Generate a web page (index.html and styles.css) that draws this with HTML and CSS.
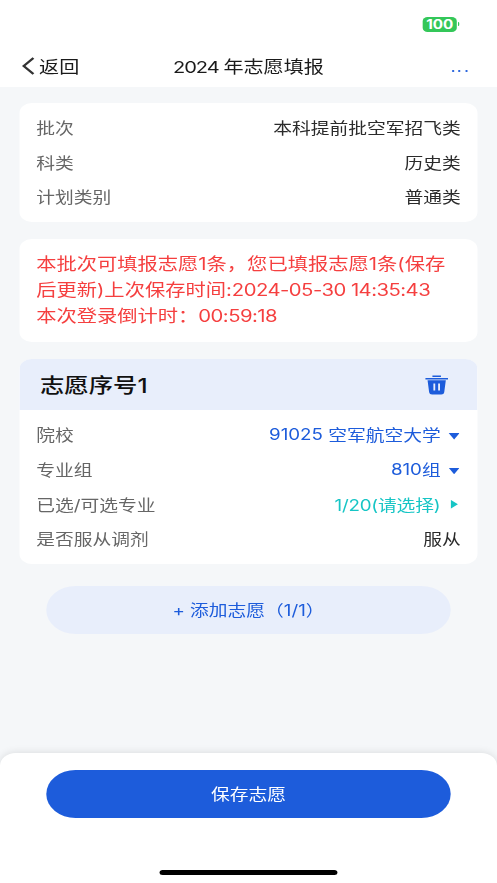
FILE: index.html
```html
<!DOCTYPE html>
<html lang="zh-CN">
<head>
<meta charset="utf-8">
<title>2024年志愿填报</title>
<link rel="stylesheet" href="styles.css">
</head>
<body>
<div class="screen">
  <header class="top">
    <div class="status"><span class="battery">100</span><span class="battery-tip"></span></div>
    <nav class="nav">
      <a class="back"><svg class="chevron" viewBox="0 0 10 18"><path d="M9.2 1 1.2 9 9.2 17"/></svg><span>返回</span></a>
      <h1 class="title"><span class="year">2024</span>年志愿填报</h1>
      <span class="more"><i></i><i></i><i></i></span>
    </nav>
  </header>
  <main class="content">
    <section class="card rows">
      <div class="row"><span class="label">批次</span><span>本科提前批空军招飞类</span></div>
      <div class="row"><span class="label">科类</span><span>历史类</span></div>
      <div class="row"><span class="label">计划类别</span><span>普通类</span></div>
    </section>
    <section class="card notice">
      <p>本批次可填报志愿1条，您已填报志愿1条(保存</p>
      <p>后更新)上次保存时间:<span class="stamp">2024-05-30 14:35:43</span></p>
      <p>本次登录倒计时：<span class="stamp">00:59:18</span></p>
    </section>
    <section class="card wish">
      <div class="wish-head">
        <h2>志愿序号1</h2>
        <svg class="trash" viewBox="0 0 19 20"><path d="M6 0.4h7v1.7H6zM0.2 3h18.6v1.5H0.2z"/><path fill-rule="evenodd" d="M2 5.3h15l-1.3 12q-.2 2.2-2.4 2.2H5.7q-2.2 0-2.4-2.2zM6.8 8.5v7h1.5v-7zm3.9 0v7h1.5v-7z"/></svg>
      </div>
      <div class="rows">
        <div class="row"><span class="label">院校</span><span class="pick"><span class="num">91025 </span>空军航空大学<i class="down"></i></span></div>
        <div class="row"><span class="label">专业组</span><span class="pick"><span class="num">810</span>组<i class="down"></i></span></div>
        <div class="row"><span class="label">已选/可选专业</span><span class="pick teal">1/20(请选择)<i class="right"></i></span></div>
        <div class="row"><span class="label">是否服从调剂</span><span>服从</span></div>
      </div>
    </section>
    <button class="button add">+ 添加志愿（1/1）</button>
  </main>
  <footer class="footer">
    <button class="button save">保存志愿</button>
    <div class="home"></div>
  </footer>
</div>
</body>
</html>
```
FILE: styles.css
```css
* { box-sizing: border-box; }
html, body { margin: 0; height: 883px; overflow: hidden; background: #f5f7f9; }
.screen {
  width: 408px;
  height: 883px;
  display: flex;
  flex-direction: column;
  transform: scaleX(1.2181);
  transform-origin: 0 0;
  font-family: Inter, "Noto Sans CJK SC", sans-serif;
  font-size: 15.4px;
  color: #2b2b2b;
  white-space: nowrap;
}
h1, h2, p { margin: 0; font-weight: 400; }
.top { height: 87px; background: #fff; }
.status { height: 47px; padding: 17px 30.6px 0 0; display: flex; justify-content: flex-end; align-items: flex-start; }
.battery {
  width: 27.4px; height: 14.5px; border-radius: 4px; background: #34c759;
  color: #fff; font-size: 12.5px; line-height: 15.6px; font-weight: 700; text-align: center;
}
.battery-tip { width: 1.7px; height: 4px; margin: 5px 0 0 1px; border-radius: 0 2px 2px 0; background: #34c759; }
.nav { height: 38px; padding: 0 18px; display: grid; grid-template-columns: 1fr auto 1fr; align-items: center; font-size: 16.5px; color: #1a1a1a; }
.back { display: flex; align-items: center; gap: 3.6px; }
.chevron { width: 10.5px; height: 18px; fill: none; stroke: #333; stroke-width: 2; }
.title { font-size: 16.5px; }
.year { margin-right: 4px; letter-spacing: -0.9px; }
.more { display: flex; justify-content: flex-end; gap: 3.4px; padding: 10px 6.4px 0 0; }
.more i { width: 2px; height: 2px; border-radius: 50%; background: #1d5cdb; }
.content { flex: 1; padding: 16px 16.4px 0; display: flex; flex-direction: column; gap: 16.7px; }
.card { background: #fff; border-radius: 10px; overflow: hidden; flex: none; }
.rows { padding: 6.7px 13.3px 8.7px; }
.row { height: 34.7px; display: flex; align-items: center; justify-content: space-between; }
.label { color: #666; }
.notice { height: 103px; padding: 13.2px 13.3px 0; font-size: 16.65px; line-height: 25.7px; color: #f53f3f; }
.stamp { letter-spacing: -0.43px; }
.wish-head { height: 51.5px; padding: 0 23.3px 0 16.4px; display: flex; align-items: center; justify-content: space-between; background: #e8eefb; color: #111; }
.wish-head h2 { font-size: 20px; font-weight: 500; }
.trash { width: 19px; height: 20px; fill: #1d5cdb; }
.pick { display: flex; align-items: center; color: #1d5cdb; }
.num { white-space: pre; }
.teal { color: #16c5c5; letter-spacing: -0.15px; }
.down { width: 9px; height: 6.5px; margin: 4px 1px 0 6.5px; background: currentColor; clip-path: polygon(0 0, 100% 0, 50% 100%); }
.right { width: 6px; height: 9px; margin: 1px 2.4px 0 8.4px; background: currentColor; clip-path: polygon(0 0, 100% 50%, 0 100%); }
.button { display: block; width: 331.4px; height: 47.6px; padding: 0 0 2px; border: 0; border-radius: 24px; font: inherit; }
.add { align-self: center; margin-top: 5px; background: #e8eefb; color: #1d5cdb; }
.footer { height: 130px; padding-top: 17px; display: flex; flex-direction: column; align-items: center; background: #fff; border-radius: 13px 13px 0 0; box-shadow: 0 0 8px rgba(0, 0, 0, 0.12); }
.save { background: #1d5cdb; color: #fff; }
.home { width: 145.5px; height: 5px; margin-top: 52.5px; border-radius: 3px; background: #000; }
```
